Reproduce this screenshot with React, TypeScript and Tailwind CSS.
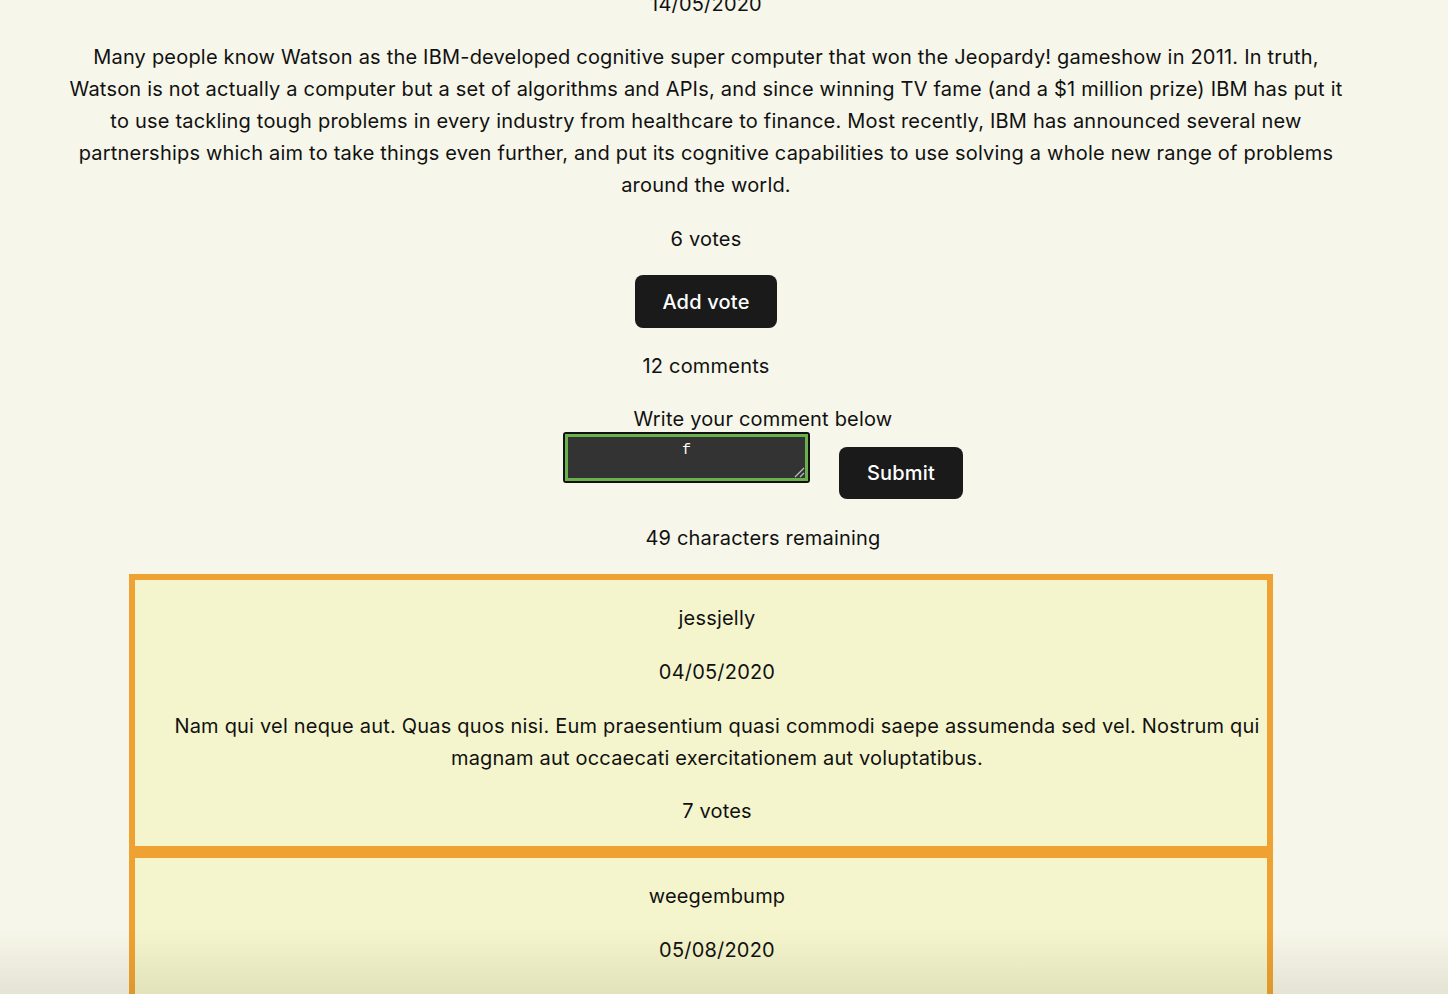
import React from "react";

const font = { fontFamily: "Inter, 'Noto Sans', sans-serif" };

function Card({ author, date, body, votes, minH }: { author: string; date: string; body?: string; votes?: string; minH?: boolean }) {
  return (
    <div className={"border-[6px] border-[#efa232] bg-[#f4f5cd] pl-[38px] pr-[6px] text-center" + (minH ? " min-h-[200px]" : "")}>
      <p className="my-[22px] leading-[32px]">{author}</p>
      <p className="my-[22px] leading-[32px]">{date}</p>
      {body && <p className="my-[21px] leading-[32px]">{body}</p>}
      {votes && <p className="mb-[19px] mt-[21px] leading-[32px]">{votes}</p>}
    </div>
  );
}

export default function App() {
  return (
    <div className="relative min-h-screen w-full overflow-hidden bg-[#f6f6ea] text-[20px] tracking-[0.2px] text-[#111]" style={font}>
      <div className="pr-[36px] text-center">
        <p className="mt-[-12px] leading-[32px]">14/05/2020</p>
        <p className="mx-auto mt-[21px] w-[1278px] leading-[32px]">
          Many people know Watson as the IBM-developed cognitive super computer that won the Jeopardy! gameshow in 2011. In truth, Watson is not actually a computer but a set of algorithms and APIs, and since winning TV fame (and a $1 million prize) IBM has put it to use tackling tough problems in every industry from healthcare to finance. Most recently, IBM has announced several new partnerships which aim to take things even further, and put its cognitive capabilities to use solving a whole new range of problems around the world.
        </p>
        <p className="mt-[22px] leading-[32px]">6 votes</p>
        <button className="mt-[20px] h-[53px] w-[142px] rounded-[8px] bg-[#1a1a1a] text-[20px] font-medium text-white">
          Add vote
        </button>
        <p className="mt-[22px] leading-[32px]">12 comments</p>
        <div className="pl-[114px]">
          <p className="mt-[24px] leading-[26px]">Write your comment below</p>
          <div className="flex items-start justify-center gap-[29px]">
            <div className="relative h-[51px] w-[247px] rounded-[3px] border-[2px] border-[#111] bg-[#333]">
              <div className="absolute inset-0 border-[3px] border-[#6ab04c]"></div>
              <div className="pt-[8px] text-center text-[15px] leading-[18px] text-white" style={{ fontFamily: "'Liberation Mono', monospace" }}>
                f
              </div>
              <svg className="absolute bottom-[3px] right-[3px]" width="12" height="12" viewBox="0 0 12 12">
                <line x1="2" y1="11" x2="11" y2="2" stroke="#bbb" strokeWidth="1.2" />
                <line x1="7" y1="11" x2="11" y2="7" stroke="#bbb" strokeWidth="1.2" />
              </svg>
            </div>
            <button className="mt-[15px] h-[52px] w-[124px] rounded-[8px] bg-[#1a1a1a] text-[20px] font-medium text-white">
              Submit
            </button>
          </div>
          <p className="mt-[23px] leading-[32px]">49 characters remaining</p>
        </div>
      </div>
      <div className="ml-[129px] mt-[20px] w-[1144px]">
        <Card
          author="jessjelly"
          date="04/05/2020"
          body="Nam qui vel neque aut. Quas quos nisi. Eum praesentium quasi commodi saepe assumenda sed vel. Nostrum qui magnam aut occaecati exercitationem aut voluptatibus."
          votes="7 votes"
        />
        <Card author="weegembump" date="05/08/2020" minH />
      </div>
      <div className="pointer-events-none fixed bottom-0 left-0 right-0 h-[64px] bg-linear-to-b from-transparent to-[rgba(60,50,0,0.09)]"></div>
    </div>
  );
}
